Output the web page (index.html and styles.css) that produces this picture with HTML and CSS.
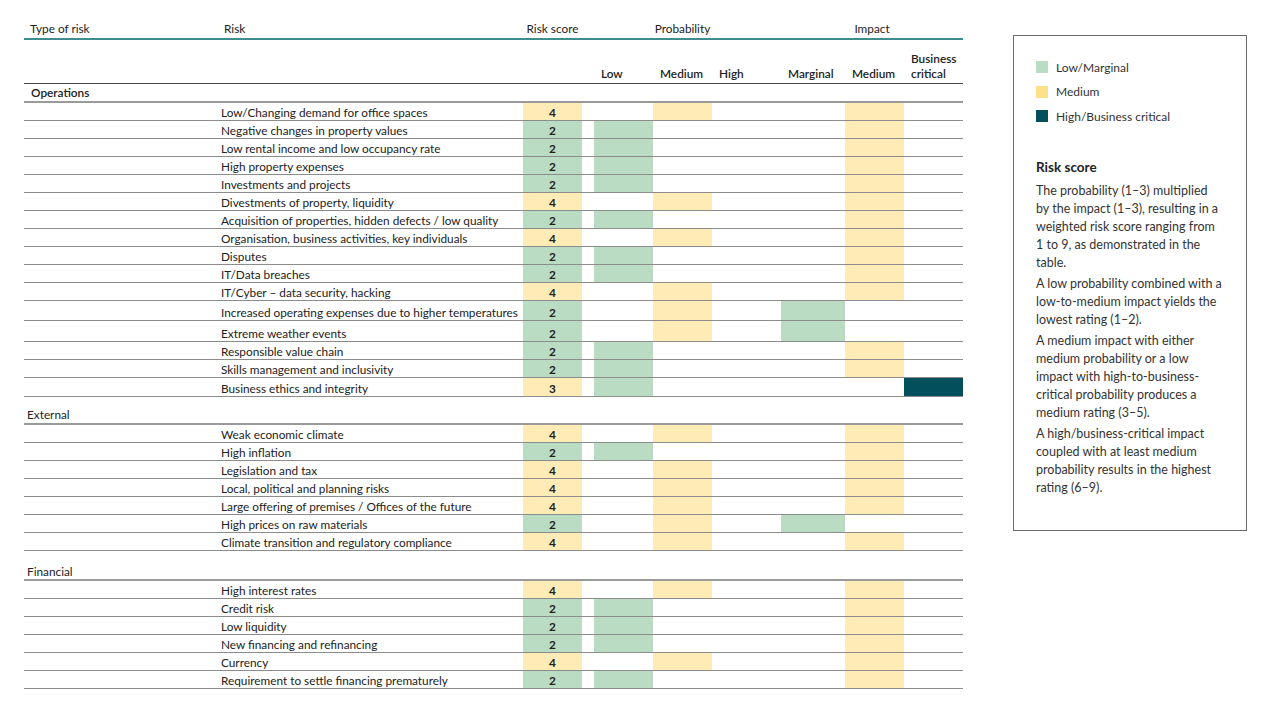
FILE: index.html
```html
<!DOCTYPE html>
<html lang="en">
<head>
    <meta charset="UTF-8">
    <meta name="viewport" content="width=device-width, initial-scale=1.0">
    <title>Risk matrix</title>
    <link rel="stylesheet" href="styles.css">
</head>
<body>
<div class="page">

    <!-- Risk table -->
    <table class="risk-table">
        <colgroup>
            <col class="c-type"><col class="c-risk"><col class="c-score"><col class="c-gap">
            <col class="c-lvl"><col class="c-lvl"><col class="c-lvl"><col class="c-gap2">
            <col class="c-marg"><col class="c-lvl"><col class="c-lvl">
        </colgroup>
        <thead>
            <tr class="head-main">
                <th class="left">Type of risk</th>
                <th class="left">Risk</th>
                <th>Risk score</th>
                <th></th>
                <th colspan="3">Probability</th>
                <th></th>
                <th colspan="3">Impact</th>
            </tr>
            <tr class="head-sub">
                <th></th><th></th><th></th><th></th>
                <th>Low</th><th>Medium</th><th>High</th><th></th>
                <th>Marginal</th><th>Medium</th><th>Business<br>critical</th>
            </tr>
        </thead>
        <tbody>
            <tr class="group first"><td colspan="11">Operations</td></tr>
            <tr><td></td><td class="risk">Low/Changing demand for office spaces</td><td class="score y">4</td><td></td><td></td><td class="y"></td><td></td><td></td><td></td><td class="y"></td><td></td></tr>
            <tr><td></td><td class="risk">Negative changes in property values</td><td class="score g">2</td><td></td><td class="g"></td><td></td><td></td><td></td><td></td><td class="y"></td><td></td></tr>
            <tr><td></td><td class="risk">Low rental income and low occupancy rate</td><td class="score g">2</td><td></td><td class="g"></td><td></td><td></td><td></td><td></td><td class="y"></td><td></td></tr>
            <tr><td></td><td class="risk">High property expenses</td><td class="score g">2</td><td></td><td class="g"></td><td></td><td></td><td></td><td></td><td class="y"></td><td></td></tr>
            <tr><td></td><td class="risk">Investments and projects</td><td class="score g">2</td><td></td><td class="g"></td><td></td><td></td><td></td><td></td><td class="y"></td><td></td></tr>
            <tr><td></td><td class="risk">Divestments of property, liquidity</td><td class="score y">4</td><td></td><td></td><td class="y"></td><td></td><td></td><td></td><td class="y"></td><td></td></tr>
            <tr><td></td><td class="risk">Acquisition of properties, hidden defects / low quality</td><td class="score g">2</td><td></td><td class="g"></td><td></td><td></td><td></td><td></td><td class="y"></td><td></td></tr>
            <tr><td></td><td class="risk">Organisation, business activities, key individuals</td><td class="score y">4</td><td></td><td></td><td class="y"></td><td></td><td></td><td></td><td class="y"></td><td></td></tr>
            <tr><td></td><td class="risk">Disputes</td><td class="score g">2</td><td></td><td class="g"></td><td></td><td></td><td></td><td></td><td class="y"></td><td></td></tr>
            <tr><td></td><td class="risk">IT/Data breaches</td><td class="score g">2</td><td></td><td class="g"></td><td></td><td></td><td></td><td></td><td class="y"></td><td></td></tr>
            <tr><td></td><td class="risk">IT/Cyber – data security, hacking</td><td class="score y">4</td><td></td><td></td><td class="y"></td><td></td><td></td><td></td><td class="y"></td><td></td></tr>
            <tr class="tall"><td></td><td class="risk">Increased operating expenses due to higher temperatures</td><td class="score g">2</td><td></td><td></td><td class="y"></td><td></td><td></td><td class="g"></td><td></td><td></td></tr>
            <tr class="taller"><td></td><td class="risk">Extreme weather events</td><td class="score g">2</td><td></td><td></td><td class="y"></td><td></td><td></td><td class="g"></td><td></td><td></td></tr>
            <tr><td></td><td class="risk">Responsible value chain</td><td class="score g">2</td><td></td><td class="g"></td><td></td><td></td><td></td><td></td><td class="y"></td><td></td></tr>
            <tr><td></td><td class="risk">Skills management and inclusivity</td><td class="score g">2</td><td></td><td class="g"></td><td></td><td></td><td></td><td></td><td class="y"></td><td></td></tr>
            <tr class="mid"><td></td><td class="risk">Business ethics and integrity</td><td class="score y">3</td><td></td><td class="g"></td><td></td><td></td><td></td><td></td><td></td><td class="d"></td></tr>

            <tr class="group"><td colspan="11">External</td></tr>
            <tr><td></td><td class="risk">Weak economic climate</td><td class="score y">4</td><td></td><td></td><td class="y"></td><td></td><td></td><td></td><td class="y"></td><td></td></tr>
            <tr><td></td><td class="risk">High inflation</td><td class="score g">2</td><td></td><td class="g"></td><td></td><td></td><td></td><td></td><td class="y"></td><td></td></tr>
            <tr><td></td><td class="risk">Legislation and tax</td><td class="score y">4</td><td></td><td></td><td class="y"></td><td></td><td></td><td></td><td class="y"></td><td></td></tr>
            <tr><td></td><td class="risk">Local, political and planning risks</td><td class="score y">4</td><td></td><td></td><td class="y"></td><td></td><td></td><td></td><td class="y"></td><td></td></tr>
            <tr><td></td><td class="risk">Large offering of premises / Offices of the future</td><td class="score y">4</td><td></td><td></td><td class="y"></td><td></td><td></td><td></td><td class="y"></td><td></td></tr>
            <tr><td></td><td class="risk">High prices on raw materials</td><td class="score g">2</td><td></td><td></td><td class="y"></td><td></td><td></td><td class="g"></td><td></td><td></td></tr>
            <tr><td></td><td class="risk">Climate transition and regulatory compliance</td><td class="score y">4</td><td></td><td></td><td class="y"></td><td></td><td></td><td></td><td class="y"></td><td></td></tr>

            <tr class="group spaced"><td colspan="11">Financial</td></tr>
            <tr><td></td><td class="risk">High interest rates</td><td class="score y">4</td><td></td><td></td><td class="y"></td><td></td><td></td><td></td><td class="y"></td><td></td></tr>
            <tr><td></td><td class="risk">Credit risk</td><td class="score g">2</td><td></td><td class="g"></td><td></td><td></td><td></td><td></td><td class="y"></td><td></td></tr>
            <tr><td></td><td class="risk">Low liquidity</td><td class="score g">2</td><td></td><td class="g"></td><td></td><td></td><td></td><td></td><td class="y"></td><td></td></tr>
            <tr><td></td><td class="risk">New financing and refinancing</td><td class="score g">2</td><td></td><td class="g"></td><td></td><td></td><td></td><td></td><td class="y"></td><td></td></tr>
            <tr><td></td><td class="risk">Currency</td><td class="score y">4</td><td></td><td></td><td class="y"></td><td></td><td></td><td></td><td class="y"></td><td></td></tr>
            <tr><td></td><td class="risk">Requirement to settle financing prematurely</td><td class="score g">2</td><td></td><td class="g"></td><td></td><td></td><td></td><td></td><td class="y"></td><td></td></tr>
        </tbody>
    </table>

    <!-- Legend -->
    <aside class="legend">
        <ul class="legend-list">
            <li><span class="swatch g"></span>Low/Marginal</li>
            <li><span class="swatch y"></span>Medium</li>
            <li><span class="swatch d"></span>High/Business critical</li>
        </ul>
        <h3>Risk score</h3>
        <p>The probability (1–3) multiplied by the impact (1–3), resulting in a weighted risk score ranging from 1 to 9, as demonstrated in the table.</p>
        <p>A low probability combined with a low-to-medium impact yields the lowest rating (1–2).</p>
        <p>A medium impact with either medium probability or a low impact with high-to-business-critical probability produces a medium rating (3–5).</p>
        <p>A high/business-critical impact coupled with at least medium probability results in the highest rating (6–9).</p>
    </aside>

</div>
</body>
</html>
```

FILE: styles.css
```css
body {
    margin: 0;
    font-family: 'Lato', 'Open Sans', sans-serif;
    color: #222222;
    background: #ffffff;
}

.page {
    display: flex;
    align-items: flex-start;
    gap: 50px;
    padding: 18px 0 0 24px;
}

/* Table */
.risk-table {
    border-collapse: collapse;
    table-layout: fixed;
    width: 939px;
    font-size: 11.8px;
}

.c-type { width: 194px; }
.c-risk { width: 305px; }
.c-score { width: 59px; }
.c-gap { width: 12px; }
.c-lvl { width: 59px; }
.c-gap2 { width: 10px; }
.c-marg { width: 64px; }

.risk-table th {
    font-weight: normal;
    padding: 0;
    line-height: 15px;
}

.head-main th {
    height: 20px;
    text-align: center;
    vertical-align: middle;
    border-bottom: 2px solid #3f8c8e;
}

.head-main th.left {
    text-align: left;
    padding-left: 6px;
}

.head-sub th {
    height: 41px;
    text-align: left;
    vertical-align: bottom;
    padding: 0 0 2px 7px;
    font-weight: 600;
    border-bottom: 1px solid #4a4a4a;
}

.risk-table td {
    height: 17px;
    padding: 0;
    border-bottom: 1px solid #8c8c8c;
    line-height: 15px;
    vertical-align: bottom;
}

.risk-table td.risk {
    padding-left: 3px;
    white-space: nowrap;
}

.risk-table td.score {
    text-align: center;
    font-weight: bold;
}

.risk-table tr.tall td { height: 19px; }
.risk-table tr.taller td { height: 20px; }
.risk-table tr.mid td { height: 18px; }

.risk-table tr.group td {
    height: 25px;
    padding-left: 3px;
    padding-bottom: 1px;
    border-bottom: 2px solid #9a9a9a;
}

.risk-table tr.group.spaced td {
    height: 28px;
    padding-bottom: 0;
}

.risk-table tr.group.first td {
    height: 16px;
    padding-bottom: 1px;
    padding-left: 7px;
    font-weight: 600;
}

.g { background: #b9dcc3; }
.y { background: #ffebb5; }
.d { background: #034f5b; }

/* Legend */
.legend {
    margin-top: 17px;
    width: 234px;
    height: 496px;
    box-sizing: border-box;
    border: 1px solid #6a6a6a;
    padding: 19px 24px 0 22px;
    font-size: 12px;
    color: #333333;
}

.legend-list {
    list-style: none;
    margin: 0 0 30px 0;
    padding: 0;
}

.legend-list li {
    display: flex;
    align-items: center;
    gap: 8px;
    height: 24.5px;
}

.swatch {
    width: 12px;
    height: 12px;
}

.legend .swatch.y { background: #fde08a; }

.legend h3 {
    margin: 0 0 7px 0;
    font-size: 13.5px;
    font-weight: bold;
    color: #222222;
}

.legend p {
    margin: 0 0 3px 0;
    line-height: 18px;
    font-size: 12.5px;
}
```
